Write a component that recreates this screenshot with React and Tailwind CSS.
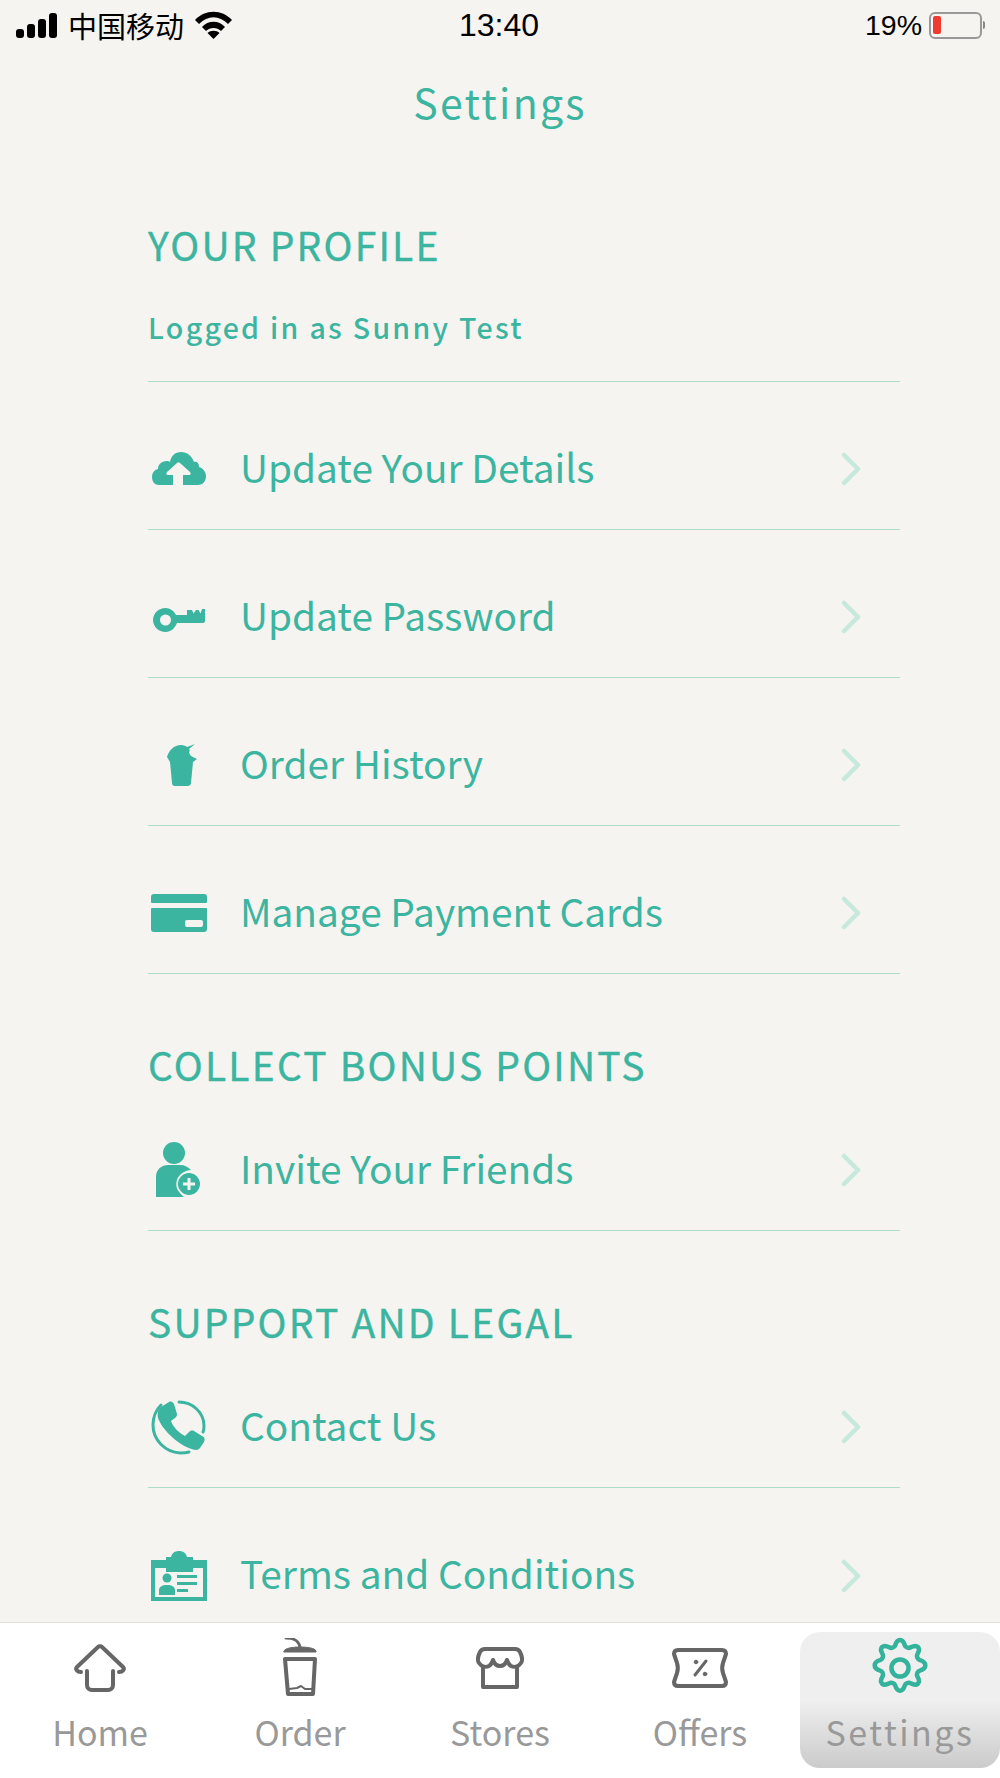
const FONT = { fontFamily: '"Noto Sans CJK SC", "Noto Sans", sans-serif' };

function CloudIcon() {
  return (
    <svg width="54" height="36" viewBox="0 0 54 36" fill="#3cb5a0">
      <path d="M21 34H7c-4 0-7-3-7-8 0-4 2-7 6-8 0-5 4-8 9-8 1 0 2 0 3 1 1-6 5-10 11-10s11 4 13 10c3-1 5 1 5 5 4 1 7 5 7 9 0 5-3 9-8 9H31V24h6c2 0 2-2 1-3L28 12c-1-1-2-1-3 0l-10 9c-1 1-1 3 1 3h5z" />
    </svg>
  );
}

function KeyIcon() {
  return (
    <svg className="mt-[5px]" width="52" height="26" viewBox="0 0 52 26" fill="#3cb5a0">
      <path fillRule="evenodd" d="M12.500 1C17 1 21 4 23 8h11V3h5l1.500 3.500L43 3h2.500l2 3.500L49 2h3v12c0 1-1 2-2 2H24c-2 5-6 9-11.500 9C5.500 25 0 19.500 0 13S5.500 1 12.500 1zm0 6.500a5.500 5.500 0 1 0 0 11 5.500 5.500 0 0 0 0-11z" />
    </svg>
  );
}

function CupIcon() {
  return (
    <svg className="ml-[5px]" width="32" height="42" viewBox="0 0 32 42" fill="#3cb5a0">
      <path d="M1 13C3 6 8 1 15 1c3 0 5 1 6 2l8-3-6 5c1 1 1 2 0 3 0 2 2 3 2 4l6 3-4 3-2 21c0 2-2 3-3 3H9c-2 0-3-1-3-3L4 18z" />
    </svg>
  );
}

function CardIcon() {
  return (
    <svg width="56" height="38" viewBox="0 0 56 38" fill="#3cb5a0">
      <path fillRule="evenodd" d="M3 0h50a3 3 0 0 1 3 3v5a1 1 0 0 1-1 1H1a1 1 0 0 1-1-1V3a3 3 0 0 1 3-3zM1 14h54a1 1 0 0 1 1 1v20a3 3 0 0 1-3 3H3a3 3 0 0 1-3-3V15a1 1 0 0 1 1-1zm35 12a2 2 0 0 0-2 2v3a2 2 0 0 0 2 2h14a2 2 0 0 0 2-2v-3a2 2 0 0 0-2-2z" />
    </svg>
  );
}

function PersonIcon() {
  return (
    <svg width="46" height="58" viewBox="0 0 46 58">
      <circle cx="18" cy="12" r="11" fill="#3cb5a0" />
      <path d="M0 56V36c0-8 6-12 12-12h12c5 0 8 2 11 5-7 0-13 6-13 14 0 5 2 10 6 13z" fill="#3cb5a0" />
      <circle cx="33" cy="43" r="11" fill="#3cb5a0" />
      <circle cx="33" cy="43" r="12" fill="none" stroke="#f6f4f0" strokeWidth="1.500" />
      <path d="M33 37v12M27 43h12" stroke="#f6f4f0" strokeWidth="3" />
    </svg>
  );
}

function PhoneIcon() {
  return (
    <svg width="56" height="56" viewBox="0 0 56 56" fill="none">
      <path d="M28 3c13 0 25 10 25 24 0 2 0 4-1 6" stroke="#3cb5a0" strokeWidth="3" strokeLinecap="round" />
      <path d="M10 6C5 11 2 18 2 26c0 15 12 27 27 28 3 0 6 0 9-1" stroke="#3cb5a0" strokeWidth="3" strokeLinecap="round" />
      <path d="M10 8l8-5c2-1 4 0 5 2l3 10c0 2-1 3-2 4l-4 3c2 6 8 12 14 15l4-4c1-1 3-2 5-1l8 5c3 1 3 4 2 6l-4 6c-2 3-7 2-11 0C25 44 11 30 7 19 6 15 7 10 10 8z" fill="#3cb5a0" />
    </svg>
  );
}

function BadgeIcon() {
  return (
    <svg width="56" height="50" viewBox="0 0 56 50">
      <path d="M20 6c1-4 4-6 8-6s7 2 8 6h6v3h14v41H0V9h15V6z" fill="#3cb5a0" />
      <rect x="4" y="17" width="48" height="29" fill="#f6f4f0" />
      <rect x="15" y="6" width="27" height="15" fill="#3cb5a0" />
      <circle cx="16" cy="27" r="4.500" fill="#3cb5a0" />
      <path d="M8 44v-5c0-3 3-5 8-5s8 2 8 5v5z" fill="#3cb5a0" />
      <path d="M26 24h20v3H26zM26 31h20v3H26zM26 38h11v3H26z" fill="#3cb5a0" />
    </svg>
  );
}

function Chevron() {
  return (
    <svg width="20" height="34" viewBox="0 0 20 34" fill="none" stroke="#c6e8dd" strokeWidth="4.500" strokeLinecap="round" strokeLinejoin="round">
      <path d="M3 3l14 14L3 31" />
    </svg>
  );
}

function SettingRow({ icon, label, last }) {
  return (
    <div className={`flex h-[148px] items-center pt-[27px] ${last ? "" : "border-b border-[#aedcca]"}`}>
      <div className="flex w-[62px] justify-center">{icon}</div>
      <span className="ml-[30px] flex-1 pb-[6px] text-[38.800px] leading-none text-[#3cb5a0]">{label}</span>
      <div className="mr-[39px]"><Chevron /></div>
    </div>
  );
}

function SectionTitle({ children }) {
  return <h2 className="text-[39px] font-normal leading-none tracking-[2.200px] text-[#3cb5a0] [-webkit-text-stroke:0.4px_#3cb5a0]">{children}</h2>;
}

function StatusBar() {
  return (
    <div className="relative flex h-[50px] items-center justify-between pl-4 pr-[15px] text-black">
      <div className="flex items-center">
        <svg width="42" height="25" viewBox="0 0 42 25" fill="#000">
          <rect x="0" y="16" width="8" height="9" rx="3" />
          <rect x="11" y="11" width="8" height="14" rx="3" />
          <rect x="22" y="6" width="8" height="19" rx="3" />
          <rect x="33" y="0" width="8" height="25" rx="3" />
        </svg>
        <span className="ml-[10px] text-[29px] leading-none">中国移动</span>
        <svg className="ml-[11px]" width="37" height="28" viewBox="0 0 37 28" fill="#000">
          <path d="M0 9C10-2 27-2 37 9l-4 4C24 4 13 4 4 13z" />
          <path d="M7 16c6-7 17-7 23 0l-4 4c-4-4-11-4-15 0z" />
          <path d="M18.500 28l-6-6c3-3 9-3 12 0z" />
        </svg>
      </div>
      <span className="absolute left-[459px] text-[32px] font-medium leading-none" style={{ fontFamily: '"Liberation Sans", sans-serif' }}>13:40</span>
      <div className="flex items-center">
        <span className="text-[28.500px] leading-none" style={{ fontFamily: '"Liberation Sans", sans-serif' }}>19%</span>
        <div className="ml-[7px] flex h-[27px] w-[53px] items-center rounded-[6px] border-2 border-[#999] pl-[2px]">
          <div className="h-[18px] w-[8px] rounded-[2px] bg-[#f03a30]" />
        </div>
        <div className="ml-[1px] h-[8px] w-[2px] rounded-r bg-[#888]" />
      </div>
    </div>
  );
}

function Tab({ icon, label, active }) {
  return (
    <div className={`flex h-[136px] w-[200px] flex-col items-center rounded-[20px] ${active ? "bg-gradient-to-b from-[#efefef] from-50% to-[#cbcbcb]" : ""}`}>
      <div className="flex h-[72px] items-center justify-center">{icon}</div>
      <span className={`mt-[3px] text-[34px] leading-[50px] text-[#999] ${active ? "tracking-[2.500px]" : ""}`}>{label}</span>
    </div>
  );
}

function TabBar() {
  const stroke = { fill: "none", stroke: "#666", strokeWidth: 4, strokeLinecap: "round", strokeLinejoin: "round" };
  return (
    <div className="flex h-[156px] items-start border-t border-[#e2e0db] bg-white pt-[9px]">
      <Tab label="Home" icon={
        <svg width="52" height="48" viewBox="0 0 52 48" {...stroke}>
          <path d="M7 28c-4 0-6-3-4-5L24 3c1-1 3-1 4 0l21 20c2 2 0 5-4 5" />
          <path d="M13 27v14c0 3 2 5 5 5h16c3 0 5-2 5-5V27" />
        </svg>
      } />
      <Tab label="Order" icon={
        <svg width="34" height="60" viewBox="0 0 34 60" {...stroke}>
          <path d="M3 0c6 0 12 1 14 9" strokeWidth="3" />
          <path d="M1 13c1-3 9-4 16-4s15 1 16 4v1H1z" fill="#666" strokeWidth="1" />
          <path d="M2 21h30l-2 35H5z" />
          <path d="M6 51l8-1 4-2 4 3h7" strokeWidth="2" />
        </svg>
      } />
      <Tab label="Stores" icon={
        <svg width="48" height="42" viewBox="0 0 48 42" {...stroke}>
          <path d="M9 2h30c3 0 4 1 5 3 2 4 3 8 1 11-2 3-6 5-10 3-2-1-3-3-4-6-1 3-3 6-7 6s-6-3-7-6c-1 3-2 5-4 6-4 2-8 0-10-3-2-3-1-7 1-11 1-2 2-3 5-3z" />
          <path d="M7 20v20h34V20" />
        </svg>
      } />
      <Tab label="Offers" icon={
        <svg width="56" height="40" viewBox="0 0 56 40" {...stroke}>
          <path d="M6 2h44c3 0 4 2 4 4l-3 9c-1 3-1 7 0 10l3 9c0 2-1 4-4 4H6c-3 0-4-2-4-4l3-9c1-3 1-7 0-10L2 6c0-2 1-4 4-4z" />
          <path d="M34 13L23 27" strokeWidth="3" />
          <circle cx="24" cy="14" r="1.800" fill="#666" strokeWidth="1" />
          <circle cx="33" cy="26" r="1.800" fill="#666" strokeWidth="1" />
        </svg>
      } />
      <Tab active label="Settings" icon={
        <svg width="64" height="64" viewBox="0 0 24 24" fill="none" stroke="#33b29c" strokeWidth="1.700" strokeLinejoin="round">
          <path d="M12 1.500c1.200 0 1.500 1 1.800 2 .2.700 1.400 1.200 2.100.8 1-.5 1.900-1 2.800-.2.900.9.400 1.800-.2 2.800-.4.700.1 1.900.9 2.100 1 .3 2.100.6 2.100 2s-1.100 1.700-2.100 2c-.8.200-1.300 1.400-.9 2.100.6 1 1.100 1.900.2 2.800-.9.800-1.800.3-2.800-.2-.7-.4-1.900.1-2.100.8-.3 1-.6 2-1.800 2s-1.500-1-1.800-2c-.2-.7-1.400-1.200-2.100-.8-1 .5-1.900 1-2.800.2-.9-.9-.4-1.800.2-2.800.4-.7-.1-1.900-.9-2.100-1-.3-2.100-.6-2.100-2s1.100-1.700 2.100-2c.8-.2 1.300-1.400.9-2.100-.6-1-1.100-1.900-.2-2.800.9-.8 1.800-.3 2.800.2.700.4 1.900-.1 2.100-.8.300-1 .6-2 1.800-2z" />
          <circle cx="12" cy="12" r="3.200" />
        </svg>
      } />
    </div>
  );
}

export default function App() {
  return (
    <div className="flex h-[1778px] w-[1000px] flex-col overflow-hidden bg-[#f6f4f0]" style={FONT}>
      <StatusBar />
      <div className="flex-1 overflow-hidden">
        <h1 className="mt-[31px] text-center text-[41px] leading-[40px] tracking-[2.300px] text-[#3cb5a0]">Settings</h1>
        <div className="ml-[148px] mr-[100px] mt-[104px]">
          <SectionTitle>YOUR PROFILE</SectionTitle>
          <p className="mt-[48px] h-[30px] text-[28.500px] font-medium leading-[30px] tracking-[2.300px] text-[#3cb5a0]">Logged in as Sunny Test</p>
          <div className="mt-[39px] border-b border-[#aedcca]" />
          <SettingRow icon={<CloudIcon />} label="Update Your Details" />
          <SettingRow icon={<KeyIcon />} label="Update Password" />
          <SettingRow icon={<CupIcon />} label="Order History" />
          <SettingRow icon={<CardIcon />} label="Manage Payment Cards" />
          <div className="mt-[71px]"><SectionTitle>COLLECT BONUS POINTS</SectionTitle></div>
          <div className="-mt-[1px]"><SettingRow icon={<PersonIcon />} label="Invite Your Friends" /></div>
          <div className="mt-[71px]"><SectionTitle>SUPPORT AND LEGAL</SectionTitle></div>
          <div className="-mt-[1px]"><SettingRow icon={<PhoneIcon />} label="Contact Us" /></div>
          <SettingRow icon={<BadgeIcon />} label="Terms and Conditions" last />
        </div>
      </div>
      <TabBar />
    </div>
  );
}
